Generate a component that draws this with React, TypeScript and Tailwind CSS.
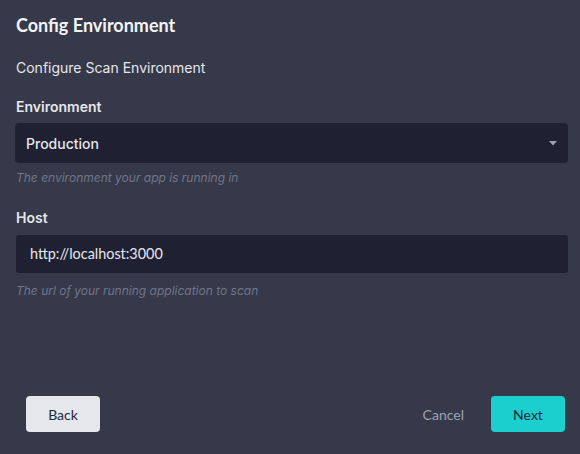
import React from "react";

export default function App() {
  return (
    <div className="w-[580px] h-[454px] bg-[#363949] flex flex-col pl-4 pr-3 overflow-hidden">
      <div className="pt-[13px] h-[52px] text-[18px] font-bold text-[#f3f4f6] font-['Lato',sans-serif] leading-6">
        Config Environment
      </div>
      <div className="mt-[6px] text-[14px] leading-5 text-[#e5e7eb] font-['Inter',sans-serif]">
        Configure Scan Environment
      </div>
      <div className="mt-[19px] text-[14px] leading-5 font-semibold text-[#e5e7eb] font-['Inter',sans-serif]">
        Environment
      </div>
      <div className="mt-[6px] -ml-px h-[40px] rounded-[4px] bg-[#1f2032] flex items-center justify-between pl-[11px] pr-[11px]">
        <span className="text-[14px] font-medium text-[#e5e7eb] font-['Inter',sans-serif]">Production</span>
        <svg width="8" height="5" viewBox="0 0 8 5"><path d="M0 0h8L4 4.5z" fill="#9ca3af" /></svg>
      </div>
      <div className="mt-[7px] text-[12px] italic leading-4 text-[#70758a] font-['Inter',sans-serif]">
        The environment your app is running in
      </div>
      <div className="mt-[22px] text-[14px] leading-5 font-semibold text-[#e5e7eb] font-['Inter',sans-serif]">
        Host
      </div>
      <div className="mt-[7px] h-[38px] rounded-[3px] bg-[#1f2032] flex items-center pl-[14px]">
        <span className="text-[14.4px] text-[#e5e7eb] font-['Lato',sans-serif]">http://localhost:3000</span>
      </div>
      <div className="mt-[10px] text-[12px] italic leading-4 text-[#70758a] font-['Inter',sans-serif]">
        The url of your running application to scan
      </div>
      <div className="flex-1" />
      <div className="flex items-center justify-between pl-[10px] pr-[3px] pb-[22px]">
        <button className="h-[36px] w-[74px] rounded-[4px] bg-[#e5e7eb] text-[14px] text-[#1f2937] font-['Lato',sans-serif]">
          Back
        </button>
        <div className="flex items-center gap-[27px]">
          <span className="text-[14px] text-[#9ca3af] font-['Lato',sans-serif]">Cancel</span>
          <button className="h-[36px] w-[74px] rounded-[4px] bg-[#1ccfcf] text-[14px] text-[#1f2937] font-['Lato',sans-serif]">
            Next
          </button>
        </div>
      </div>
    </div>
  );
}
